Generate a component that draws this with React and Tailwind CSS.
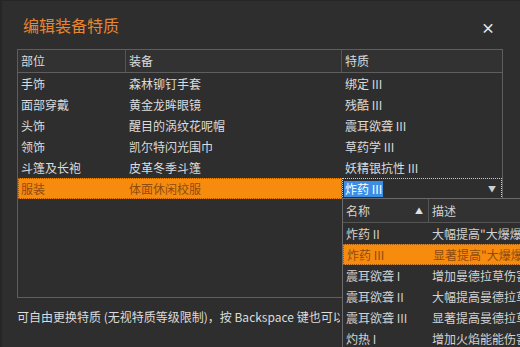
import React from "react";

const rows = [
  ["手饰", "森林铆钉手套", "绑定 III"],
  ["面部穿戴", "黄金龙眸眼镜", "残酷 III"],
  ["头饰", "醒目的涡纹花呢帽", "震耳欲聋 III"],
  ["领饰", "凯尔特闪光围巾", "草药学 III"],
  ["斗篷及长袍", "皮革冬季斗篷", "妖精银抗性 III"],
];

const options = [
  ["炸药 II", "大幅提高\"大爆爆炸\"伤害"],
  ["炸药 III", "显著提高\"大爆爆炸\"伤害", true],
  ["震耳欲聋 I", "增加曼德拉草伤害"],
  ["震耳欲聋 II", "大幅提高曼德拉草伤害"],
  ["震耳欲聋 III", "显著提高曼德拉草伤害"],
  ["灼热 I", "增加火焰能能伤害"],
];

const font = { fontFamily: '"Noto Sans CJK SC", "Noto Sans", sans-serif' };

const App = () => {
  return (
    <div
      className="relative w-[520px] h-[347px] overflow-hidden bg-[#2e2e2e] text-[12px] text-[#dcdcdc] border-l-2 border-t border-[#262626]"
      style={font}
    >
      <div className="flex items-center justify-between pl-[21px] pr-[25px] pt-[13px] h-[35px]">
        <h1 className="text-[16px] leading-[20px] text-[#e8862e]">编辑装备特质</h1>
        <span className="text-[14px] font-bold text-[#e6e6e6] mt-[5px]">×</span>
      </div>

      <div className="ml-[15px] mt-[13px] w-[486px] h-[249px] border border-[#5e5e5e]">
        <div className="grid grid-cols-[108px_216px_1fr] h-[23px] border-b border-[#5e5e5e] bg-[#323232]">
          <div className="pl-[3px] leading-[22px] border-r border-[#555]">部位</div>
          <div className="pl-[3px] leading-[22px] border-r border-[#555]">装备</div>
          <div className="pl-[3px] leading-[22px]">特质</div>
        </div>
        {rows.map((r) => (
          <div key={r[0]} className="grid grid-cols-[108px_216px_1fr] h-[21px] leading-[21px]">
            <div className="pl-[3px]">{r[0]}</div>
            <div className="pl-[3px]">{r[1]}</div>
            <div className="pl-[3px]">{r[2]}</div>
          </div>
        ))}
        <div className="grid grid-cols-[324px_1fr] h-[21px] leading-[19px]">
          <div className="grid grid-cols-[108px_216px] bg-[#f78b0e] border border-dotted border-[#9a5208] text-[#8f4b10]">
            <div className="pl-[2px]">服装</div>
            <div className="pl-[2px]">体面休闲校服</div>
          </div>
          <div className="flex items-center justify-between border border-dotted border-[#cfcfcf] pl-[1px] pr-[5px]">
            <span className="bg-[#3a8ee6] text-white px-[1px] leading-[16px]">炸药 III</span>
            <span className="text-[8px] text-[#cfcfcf]">▼</span>
          </div>
        </div>
      </div>

      <p className="ml-[15px] mt-[11px] w-[323px] leading-[16px] whitespace-nowrap overflow-hidden">
        可自由更换特质 (无视特质等级限制)，按 Backspace 键也可以清除特质
      </p>

      <div className="absolute left-[340px] top-[197px] w-[200px] h-[160px] bg-[#2e2e2e] border border-[#6a6a6a] text-[#d2d2d2] overflow-hidden">
        <div className="grid grid-cols-[86px_1fr] h-[24px] border-b border-[#555] bg-[#323232]">
          <div className="flex items-center justify-between pl-[3px] pr-[5px] border-r border-[#555]">
            <span>名称</span>
            <span className="text-[8px] text-[#e0e0e0]">▲</span>
          </div>
          <div className="pl-[3px] leading-[23px]">描述</div>
        </div>
        {options.map((o) => (
          <div
            key={o[0]}
            className={
              o[2]
                ? "grid grid-cols-[86px_1fr] h-[21px] leading-[19px] bg-[#f78b0e] border border-dotted border-[#9a5208] text-[#8f4b10]"
                : "grid grid-cols-[86px_1fr] h-[21px] leading-[21px]"
            }
          >
            <div className="pl-[3px] whitespace-nowrap">{o[0]}</div>
            <div className="pl-[3px] whitespace-nowrap overflow-hidden">{o[1]}</div>
          </div>
        ))}
      </div>
    </div>
  );
};

export default App;
